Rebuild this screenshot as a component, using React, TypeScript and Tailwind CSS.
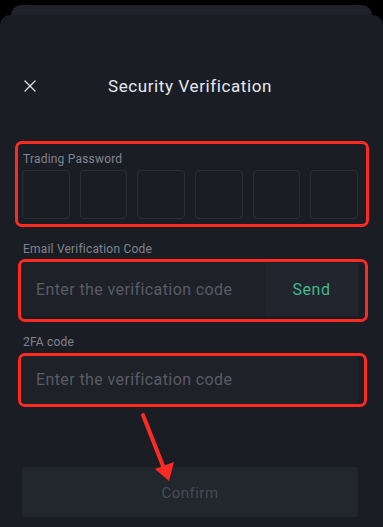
import { X } from "lucide-react";

function Annotation({ className }: { className: string }) {
  return (
    <div
      className={`pointer-events-none absolute rounded-[7px] border-[3px] border-[#ff2a22] ${className}`}
    />
  );
}

export default function App() {
  return (
    <div
      className="relative h-[527px] w-[383px] overflow-hidden bg-black"
      style={{ fontFamily: "Roboto, 'Noto Sans', sans-serif" }}
    >
      {/* card peeking out behind the sheet */}
      <div className="mx-[11px] mt-[5px] h-[10px] rounded-t-[10px] bg-[#1f222a]" />

      <div className="h-[512px] rounded-t-[10px] bg-[#1a1d24] pl-[22px] pr-[25px] pt-[52px]">
        <div className="grid h-[40px] grid-cols-[40px_1fr_40px] items-center">
          <X className="h-[20px] w-[20px] -ml-[2px] -mt-[2px] text-[#e6e8ee]" strokeWidth={1.5} />
          <h1 className="text-center text-[17px] font-normal tracking-[0.6px] text-[#e6e8ee]">
            Security Verification
          </h1>
          <span />
        </div>

        <div className="relative mt-[45px]">
          <Annotation className="-left-[7px] -right-[11px] -top-[11px] -bottom-[8px]" />
          <p className="pl-[1px] text-[12px] leading-[14px] tracking-[0.2px] text-[#80858f]">Trading Password</p>
          <div className="mt-[4px] grid grid-cols-6 gap-[10px]">
            {[0, 1, 2, 3, 4, 5].map((i) => (
              <div key={i} className="h-[49px] rounded-[4px] border border-[#2a2e36]" />
            ))}
          </div>
        </div>

        <p className="mt-[23px] pl-[1px] text-[12px] leading-[14px] tracking-[0.2px] text-[#80858f]">
          Email Verification Code
        </p>
        <div className="relative mt-[7px]">
          <Annotation className="-left-[4px] -right-[10px] -top-[4px] -bottom-[6px]" />
          <div className="flex h-[53px] items-center bg-[#1e2128]">
            <span className="flex-1 pl-[14px] text-[16px] tracking-[0.4px] text-[#585c66]">
              Enter the verification code
            </span>
            <span className="flex h-full w-[93px] items-center justify-center bg-[#22252d] text-[16px] tracking-[0.6px] text-[#41b98d]">
              Send
            </span>
          </div>
        </div>

        <p className="mt-[19px] pl-[1px] text-[12px] leading-[14px] tracking-[0.2px] text-[#80858f]">2FA code</p>
        <div className="relative mt-[7px]">
          <Annotation className="-left-[4px] -right-[9px] -top-[3px] -bottom-[3px]" />
          <div className="flex h-[48px] items-center bg-[#1e2128]">
            <span className="pl-[14px] text-[16px] tracking-[0.4px] text-[#585c66]">
              Enter the verification code
            </span>
          </div>
        </div>

        <button className="mt-[63px] flex h-[50px] w-full items-center justify-center rounded-[3px] bg-[#22262d] pt-[2px] text-[15px] tracking-[0.5px] text-[#474b55]">
          Confirm
        </button>
      </div>

      {/* red arrow annotation */}
      <svg className="pointer-events-none absolute left-0 top-0" width="383" height="527">
        <line x1="143" y1="415" x2="163" y2="466" stroke="#ff2a22" strokeWidth="4" strokeLinecap="round" />
        <polygon points="155,469 174,462 169,481" fill="#ff2a22" />
      </svg>
    </div>
  );
}
